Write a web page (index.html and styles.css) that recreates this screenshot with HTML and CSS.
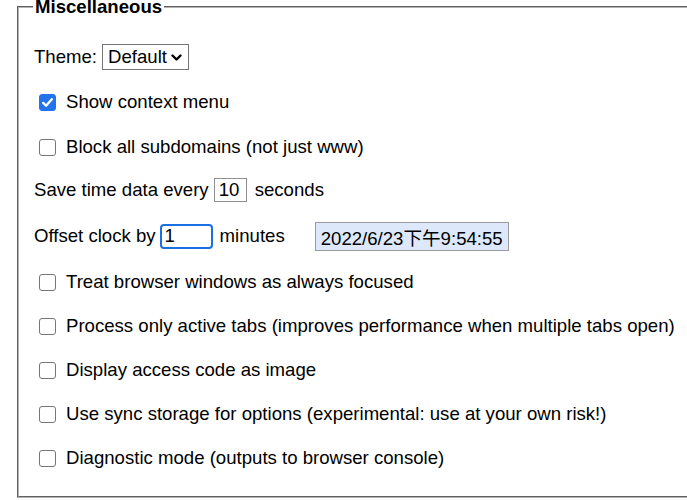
FILE: index.html
```html
<!DOCTYPE html>
<html lang="en">
<head>
  <meta charset="UTF-8">
  <meta name="viewport" content="width=device-width, initial-scale=1.0">
  <title>Options</title>
  <link rel="stylesheet" href="styles.css">
</head>
<body>
  <fieldset class="misc">
    <legend>Miscellaneous</legend>

    <div class="row">
      <span>Theme:</span>
      <span class="select"><span>Default</span><svg class="chevron" width="11" height="8" viewBox="0 0 11 8"><path d="M1.5 1.5 L5.5 5.5 L9.5 1.5" fill="none" stroke="#000" stroke-width="2.4" stroke-linecap="round" stroke-linejoin="round"/></svg></span>
    </div>

    <label class="row nudge">
      <span class="box checked"><svg width="17" height="17" viewBox="0 0 17 17"><path d="M4.2 8.9 L7.1 11.8 L12.8 5.2" fill="none" stroke="#fff" stroke-width="2.3" stroke-linecap="round" stroke-linejoin="round"/></svg></span>
      <span>Show context menu</span>
    </label>

    <label class="row nudge">
      <span class="box"></span>
      <span>Block all subdomains (not just www)</span>
    </label>

    <div class="row pull">
      <span>Save time data every</span>
      <input class="field save" type="text" value="10">
      <span>seconds</span>
    </div>

    <div class="row tall">
      <span>Offset clock by</span>
      <input class="field offset" type="text" value="1">
      <span>minutes</span>
      <span class="clock">2022/6/23下午9:54:55</span>
    </div>

    <label class="row">
      <span class="box"></span>
      <span>Treat browser windows as always focused</span>
    </label>

    <label class="row">
      <span class="box"></span>
      <span>Process only active tabs (improves performance when multiple tabs open)</span>
    </label>

    <label class="row">
      <span class="box"></span>
      <span>Display access code as image</span>
    </label>

    <label class="row">
      <span class="box"></span>
      <span>Use sync storage for options (experimental: use at your own risk!)</span>
    </label>

    <label class="row">
      <span class="box"></span>
      <span>Diagnostic mode (outputs to browser console)</span>
    </label>
  </fieldset>
</body>
</html>
```

FILE: styles.css
```css
html, body {
  margin: 0;
  padding: 0;
  overflow: hidden;
  background: #fff;
}
body {
  font-family: "Liberation Sans", Arial, "Noto Sans CJK TC", sans-serif;
  font-size: 18.6px;
  color: #000;
}
.misc {
  width: 720px;
  margin: 0 0 0 17px;
  padding: 30px 0 25px 15px;
  border: 2px groove #b4b4b4;
  display: flex;
  flex-direction: column;
  gap: 18px;
}
.misc legend {
  font-weight: bold;
  font-size: 18.6px;
  line-height: 14px;
  padding: 0 2px;
  margin-left: -1px;
}
.row {
  display: flex;
  align-items: center;
  height: 26px;
  white-space: nowrap;
}
.row.nudge {
  margin-top: 1px;
}
.row.pull {
  margin-top: -1px;
}
.row.tall {
  height: 30px;
}
.select {
  display: inline-flex;
  align-items: center;
  height: 26px;
  box-sizing: border-box;
  margin-left: 5px;
  padding: 0 6px 0 5px;
  border: 1px solid #767676;
  background: #fff;
  gap: 4px;
}
.chevron {
  margin-top: 1px;
}
.box {
  width: 17px;
  height: 17px;
  box-sizing: border-box;
  margin: 0 10px 0 5px;
  border: 1px solid #767676;
  border-radius: 3px;
  background: #fff;
  display: inline-block;
}
.box svg {
  display: block;
  margin: -1px;
}
.box.checked {
  background: #2174ee;
  border-color: #2174ee;
}
.field {
  font-family: inherit;
  font-size: 18.6px;
  color: #000;
  box-sizing: border-box;
  padding: 0 0 0 4px;
  outline: none;
  background: #fff;
}
.field.save {
  width: 33px;
  height: 24px;
  border: 1px solid #8f8f8f;
  border-radius: 0;
  margin: 0 8px 0 5px;
}
.field.offset {
  width: 53px;
  height: 25px;
  border: 2px solid #1b6fe3;
  border-radius: 4px;
  padding-left: 3px;
  margin: 0 7px 0 4px;
}
.clock {
  margin-left: 30px;
  height: 29px;
  box-sizing: border-box;
  padding: 0 5px;
  display: inline-flex;
  align-items: center;
  background: #dde9fb;
  border: 1px solid #9a9a9a;
}
```
